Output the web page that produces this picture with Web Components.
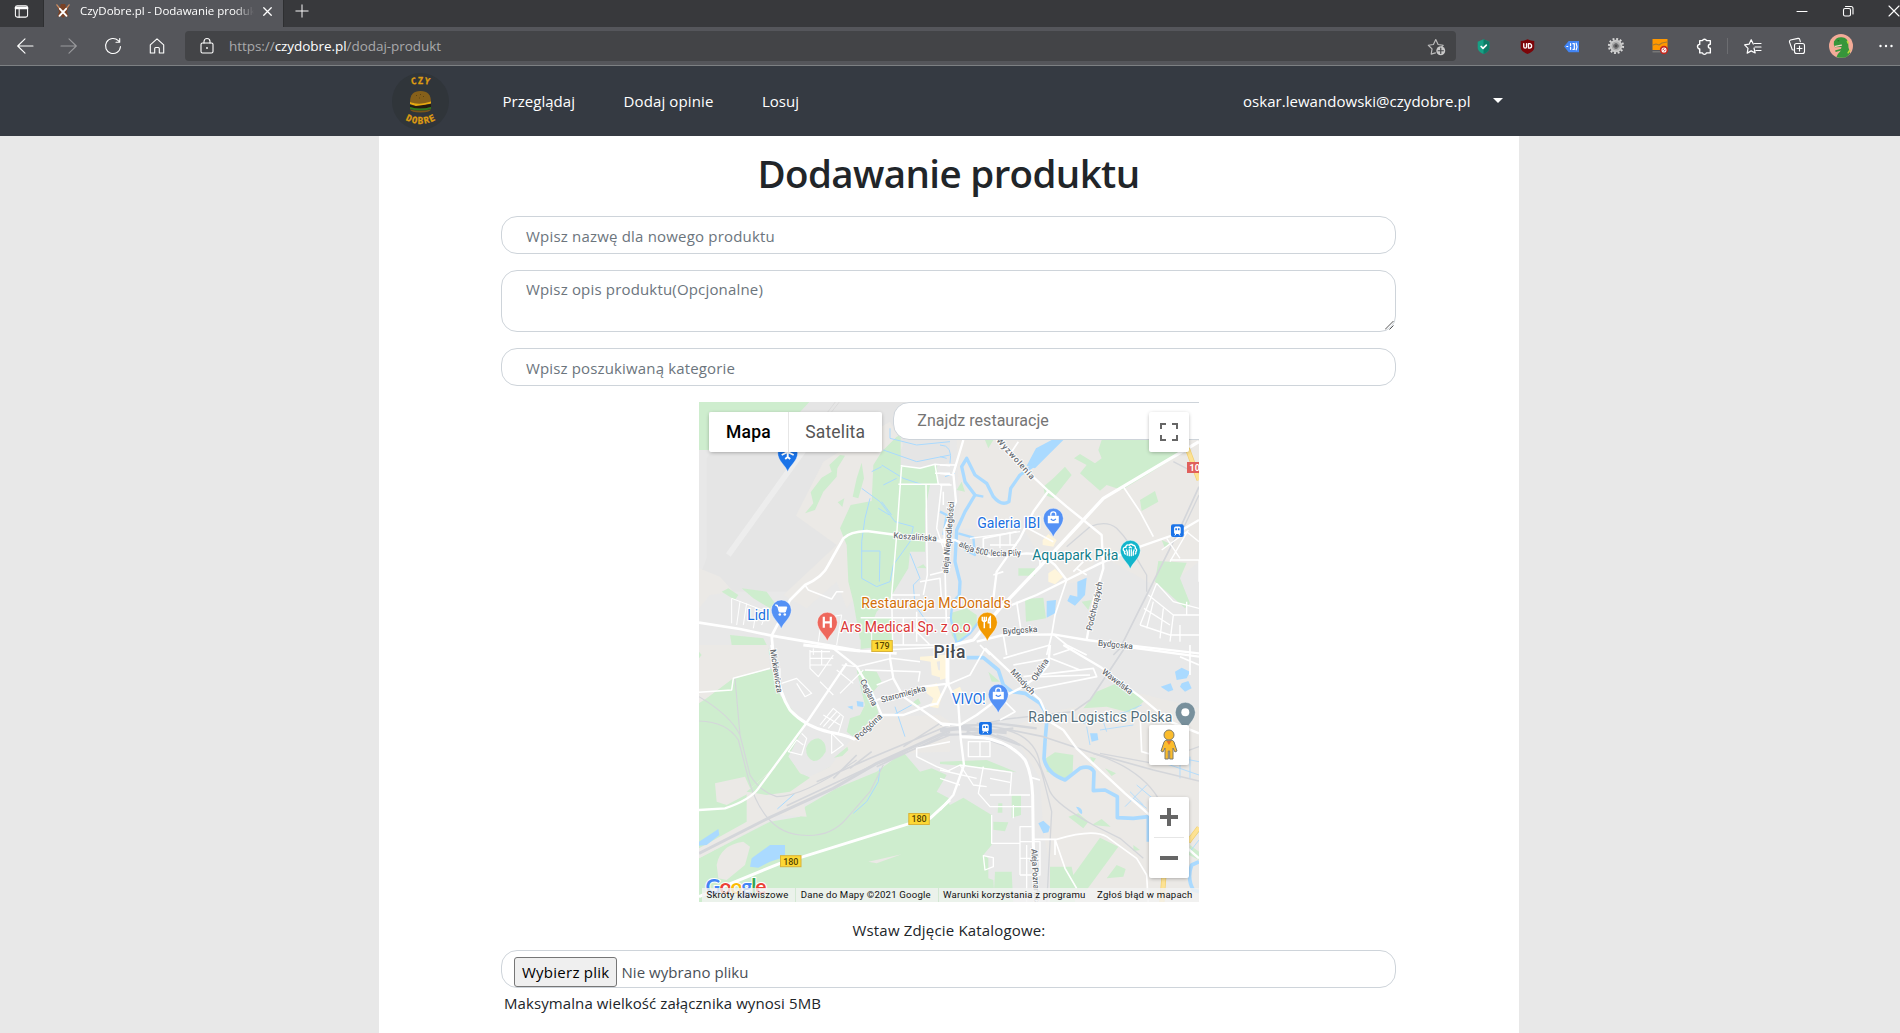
<!DOCTYPE html>
<html lang="pl">
<head>
<meta charset="utf-8">
<title>CzyDobre.pl - Dodawanie produktu</title>
<style>
html,body{margin:0;height:100%;overflow:hidden}
body{background:#e8e8e8;font-family:"Open Sans","Noto Sans",sans-serif;font-size:15px;color:#212529}
</style>
</head>
<body>
<cd-app></cd-app>
<script>
const define=(name,html,extra)=>{
  const t=document.createElement('template');t.innerHTML=html;
  customElements.define(name,class extends HTMLElement{
    constructor(){super();this.attachShadow({mode:'open'}).append(t.content.cloneNode(true));}
    connectedCallback(){extra&&extra(this);}
  });
};

/* Text run set to a given width by adjusting its tracking */
define('fit-text',`<style>:host{display:inline-block;flex:none;white-space:pre;line-height:24px}</style><slot></slot>`,el=>{
  const w=+el.getAttribute('w');if(!w)return;
  el.style.width='auto';
  const n=el.textContent.length,nat=el.getBoundingClientRect().width;
  el.style.letterSpacing=((w-nat)/n)+'px';
  el.style.width=w+'px';
});

const I={
 tabs:`<rect x="1.5" y="2" width="13" height="12" rx="2"/><path d="M2 4.2h12" stroke-width="2.6"/><path d="M5.5 4v10"/>`,
 fav:`<g stroke="none"><path fill="#7a4226" d="M5.500 0h5l1 4 3-1-2 5.500 2 6-4-1-2.500 2.500-2.500-2.500-4 1 2-6-2-5.500 3 1z"/></g><path stroke="#c98a60" stroke-width="1.600" d="M1 1l3 4M15 1l-3 4"/><path stroke="#fff" stroke-width="2.200" d="M4.500 5.500l7.500 8M11.500 5.500l-7.500 8"/>`,
 x:`<path d="M4 4l8 8M12 4l-8 8" stroke-width="1.4"/>`,
 plus:`<path d="M8 1v14M1 8h14"/>`,
 back:`<path d="M16 8H.7M8 .8L.7 8 8 15.2"/>`,
 fwd:`<path d="M0 8h15.300M8 .8L15.300 8 8 15.2"/>`,
 reload:`<path d="M15.500 8.500a7.500 7.500 0 1 1-2.200-5.800L14.500 4M14.700.5V4.200H11"/>`,
 home:`<path d="M1.300 6.800L8 .9l6.700 5.900V15H10.300V10.500a1 1 0 0 0-1-1H6.700a1 1 0 0 0-1 1V15H1.300z"/>`,
 lock:`<rect x="2" y="5" width="12" height="10" rx="1.500"/><path d="M5 5V3.500a3 3 0 0 1 6 0V5"/><circle cx="8" cy="10" r=".9" fill="#fff" stroke="none"/>`,
 starplus:`<path stroke="#bbb" d="M7 14l-4 1.200.8-5L.3 6.800l4.800-.7L7.300 1.500l2.200 4.600 4.800.7-1.500 1.500"/><circle cx="12" cy="12" r="4.200" fill="#c8c8c8" stroke="none"/><path stroke="#434447" d="M12 9.500v5M9.500 12h5"/>`,
 shield:`<g stroke="none"><path fill="#16a085" d="M8 .3L14.200 3v6c0 3.500-3 5.500-6.200 7-3.200-1.500-6.200-3.500-6.200-7V3z"/><path fill="#0d7a66" d="M8 .3L14.200 3v6c0 3.500-3 5.500-6.200 7z"/></g><path stroke-width="1.800" d="M5.500 8l2 2 3.500-3.500"/>`,
 ub:`<path stroke="none" fill="#7c0509" d="M8 .3Q11.500 2 15.200 2v7c0 3.500-4 5.500-7.200 7-3.200-1.500-7.200-3.500-7.200-7V2Q4.500 2 8 .3z"/><path stroke-width="1.400" d="M4 5v3.200q0 1.500 1.500 1.500T7 8.200V5M9 5v4.700h1q2.400-.2 2.400-2.300T10 5z"/>`,
 tag:`<path stroke="none" fill="#4285f4" d="M5 2h11v12H5L0 8z"/><path stroke-width="1.300" d="M3 8h1M7 5v2M7 9v2M9.500 5h1.500v6H9.500M13 4.500q1.600 3.500 0 7"/>`,
 gear:`<circle cx="8" cy="8" r="7" stroke="#d8d8d8" stroke-width="2.200" stroke-linecap="butt" stroke-dasharray="1.900 1.765"/><circle cx="8" cy="8" r="4.500" stroke="#c8c8c8" stroke-width="3.600"/><circle cx="8" cy="8" r="3.900" stroke="#999" stroke-width=".8"/><circle cx="8" cy="8" r="2" fill="#4c4c4f" stroke="#777"/>`,
 orange:`<path stroke="none" fill="#ff9800" d="M.5 1h15v11H.5z"/><path stroke="#a87a30" d="M1 7l3-1 3 1 3-2 5-1"/><path stroke="none" fill="#777" d="M.5 13h9v1.500h-9z"/><circle cx="12" cy="12" r="4.200" fill="#c4281e" stroke="none"/><circle cx="12" cy="12" r="2" /><path d="M10.700 13.300l2.600-2.600"/>`,
 puzzle:`<path d="M3.500 2.500h2.600a2 2 0 0 1 3.800 0h3.600v3.400a1.900 1.900 0 0 0 0 3.800v4.300H9.800a1.900 1.900 0 0 1-3.700 0H3.500V10.200A2.100 2.100 0 0 1 3.500 6z" stroke-width="1.300"/>`,
 favs:`<path d="M9 10l1.200 5-4-2.100-4 2.200.8-4.800L-.4 6.900l4.500-.7L6.200 1.700 8.300 6M9.500 5.500H16M10 9h6M11 12.500h5" stroke-width="1.200"/>`,
 coll:`<rect x="5.500" y="5.500" width="10" height="10" rx="2"/><path d="M10.500 8v5M8 10.500h5M4.500 12l-1.200-.3L.4 3.800Q.3 2.500 1.500 2L9 .4q1.300-.2 1.700 1l.6 2.300"/>`,
 dots:`<g fill="#fff" stroke="none"><circle cx="2.500" cy="8" r="1.200"/><circle cx="8" cy="8" r="1.200"/><circle cx="13.500" cy="8" r="1.200"/></g>`,
 min:`<path d="M3 8.500h10"/>`,
 restore:`<rect x="3.500" y="5.500" width="7" height="7.500" rx="1.500"/><path d="M5.500 3.500h5.500a2 2 0 0 1 2 2V11"/>`,
 close:`<path d="M3 3l10 10M13 3L3 13"/>`,
 dino:`<circle cx="8" cy="8" r="8" fill="#f3ab98" stroke="none"/><path stroke="none" fill="#36963a" d="M3.300 5Q5 1.800 8.500 2.200 12.500 2.500 12.800 6.500L13 9l1.200 4-2.400 2.100Q9 16.600 5 15.300 5.800 13 8 11L4.500 12 4 11 8 9.800 8.300 8.600 4 8.800 3.200 7z"/><path stroke="#f6d5c4" stroke-width=".8" d="M4.300 8.200l4-.8"/><path stroke="#206824" stroke-width=".7" d="M6 4.500h.5"/><path stroke="#b9d83a" d="M12.800 12.500l1-1.500M12.300 5l.4 1"/>`
};
define('ui-icon',`<style>:host{display:inline-flex;align-items:center;justify-content:center;flex:none}svg{display:block;flex:none;overflow:visible;fill:none;stroke:#fff;stroke-width:1.100;stroke-linecap:round;stroke-linejoin:round}</style>`,el=>{
  const s=el.getAttribute('s')||16;
  el.shadowRoot.innerHTML+=`<svg width="${s}" height="${s}" viewBox="0 0 16 16">${I[el.getAttribute('n')]}</svg>`;
});

define('browser-chrome',`<style>
:host{display:block;height:66px;color:#fff;background:#55565b;overflow:hidden}
.strip{display:flex;height:27px;background:#38393c}
.c44{width:42px;height:22px;padding-right:1px}
.tab{display:flex;flex:none;align-items:center;width:241px;height:27px;box-sizing:border-box;padding:0 8px 5px 12px;background:#55565b;border-left:1px solid #2e2f31;border-right:1px solid #2e2f31}
.title{flex:1;min-width:0;margin-left:10px;height:22px;display:flex;align-items:center;overflow:hidden;font-size:11.500px;-webkit-mask:linear-gradient(90deg,#000 155px,transparent 174px);mask:linear-gradient(90deg,#000 155px,transparent 174px)}
.new{width:35px;height:21px}
.win{margin-left:auto;display:flex;height:22px}.win ui-icon{width:46px}.win ui-icon:last-child{width:46px;margin-right:-17px;overflow:visible}
.bar{display:flex;align-items:center;height:38px;border-bottom:1px solid #7d8083}
.bar>*{flex:none}
.nav ui-icon{width:44px}.nav{display:flex;width:182px;padding-left:3px}
.url{display:flex;align-items:center;width:1271px;height:30px;background:#434447;border-radius:4px;font-size:13.500px;color:#a9a9ab}
.url ui-icon{width:44px}.url b{font-weight:400;color:#fff}.url .st{margin-left:auto;width:40px}
.ext{display:flex;padding-left:5px;align-items:center}.ext ui-icon{width:44.200px}
.sep{width:1px;height:16px;background:#6c6d71;margin:0 2px 0 1px}
.r{display:flex;align-items:center}.r ui-icon{width:45px}.r ui-icon:nth-child(2){width:43.500px}
</style>
<div class="strip"><ui-icon class="c44" n="tabs" s="15"></ui-icon>
<div class="tab"><ui-icon n="fav" s="14"></ui-icon><div class="title"><fit-text w="187">CzyDobre.pl - Dodawanie produktu</fit-text></div><ui-icon n="x" s="15"></ui-icon></div>
<ui-icon class="new" n="plus" s="14"></ui-icon>
<div class="win"><ui-icon n="min"></ui-icon><ui-icon n="restore"></ui-icon><ui-icon n="close"></ui-icon></div></div>
<div class="bar"><div class="nav"><ui-icon n="back"></ui-icon><ui-icon n="fwd" style="opacity:.4"></ui-icon><ui-icon n="reload"></ui-icon><ui-icon n="home"></ui-icon></div>
<div class="url"><ui-icon n="lock"></ui-icon><fit-text w="212">https://<b>czydobre.pl</b>/dodaj-produkt</fit-text><ui-icon class="st" n="starplus" s="17"></ui-icon></div>
<div class="ext"><ui-icon n="shield" s="15"></ui-icon><ui-icon n="ub" s="15"></ui-icon><ui-icon n="tag" s="15"></ui-icon><ui-icon n="gear"></ui-icon><ui-icon n="orange"></ui-icon><ui-icon n="puzzle" s="17"></ui-icon></div>
<div class="sep"></div><div class="r"><ui-icon n="favs"></ui-icon><ui-icon n="coll"></ui-icon><ui-icon n="dino" s="24"></ui-icon><ui-icon n="dots"></ui-icon></div></div>`);

define('cd-logo',`<style>:host{display:block;width:57px;height:57px}svg{display:block}text{font:bold 9px "DejaVu Sans Mono",monospace;fill:#dd9b12;stroke:#dd9b12;stroke-width:.3}</style>
<svg width="57" height="57" viewBox="0 0 57 57"><circle cx="28.500" cy="28.500" r="28.500" fill="#30353a"/>
<defs><path id="t" d="M13 14.500Q28.500 7 44 14.500"/><path id="b" d="M11 45.500Q28.500 56.500 46 45.500"/></defs>
<text text-anchor="middle"><textPath href="#t" startOffset="50%" textLength="18">CZY</textPath></text>
<text text-anchor="middle"><textPath href="#b" startOffset="50%" textLength="32">DOBRE</textPath></text>
<path fill="#86601a" d="M18 29Q18 18 28.500 18T39 29Q28 33 18 29z"/><path stroke="#5f4411" d="M24 22l1 1M28 21l1 1M32 23l-1 1M27 25l1 0"/>
<path fill="#e6a80f" d="M18 29Q28 32.500 39 28.500V30.500L26 34 18 31z"/><path fill="#241b10" d="M18 32L24 33 39 31V34Q28 37 18 34z"/><path fill="#2f7a1c" d="M18 34Q28 37 39 34V36Q28 39 18 36z"/><path fill="#7a5618" d="M18 36.500Q28 39 39 36.500Q38 39.500 28.500 39.500T18 36.500z"/></svg>`);

define('cd-navbar',`<style>
:host{display:block;height:70px;background:#353a42;color:#fff}
.in{display:flex;align-items:center;height:70px;width:1140px;margin:0 auto 0 379px;padding-left:12.500px;box-sizing:border-box}
nav{display:flex;gap:48.500px;margin-left:54px}
.user{margin-left:auto;display:flex;align-items:center;gap:22.500px;margin-right:16px}
i{border:5px solid transparent;border-top:5px solid #fff;border-bottom:0;margin-top:-1px}
</style><div class="in"><cd-logo></cd-logo><nav><fit-text w="72.500">Przeglądaj</fit-text><fit-text w="90">Dodaj opinie</fit-text><fit-text w="37">Losuj</fit-text></nav>
<div class="user"><fit-text w="227.500">oskar.lewandowski@czydobre.pl</fit-text><i></i></div></div>`);

define('cd-field',`<style>
:host{display:flex;flex:none;box-sizing:border-box;width:895px;height:38px;border:1px solid #ced4da;border-radius:16px;background:#fff;color:#6c757d;padding:7px 24px 0;position:relative}
:host([area]){height:62px;padding-top:6px}
svg{display:none;position:absolute;right:1px;bottom:1px}:host([area]) svg{display:block}
</style><slot></slot><svg width="9" height="9" viewBox="0 0 9 9" stroke="#555" fill="none"><path d="M0 8.500L8.500 0M4.500 8.500L8.500 4.500"/></svg>`);

define('cd-file',`<style>
:host{display:flex;flex:none;box-sizing:border-box;width:895px;height:38px;border:1px solid #ced4da;border-radius:16px;background:#fff;padding:6px 12px 0;gap:4.500px;color:#495057}
button{box-sizing:border-box;width:103px;height:30px;padding:0 0 1px 7px;text-align:left;border:1px solid #767676;border-radius:3px;background:#efefef;font:inherit;color:#000;line-height:24px}
.n{padding-top:3px}
</style><button><fit-text w="87.500">Wybierz plik</fit-text></button><div class="n"><fit-text w="127">Nie wybrano pliku</fit-text></div>`);

/* Map artwork is drawn in four tiles, each on a grid of three units per pixel */
const T=['translate(-9 -7) scale(.33333)','translate(241 -7) scale(.33333)','translate(-9 243) scale(.33333)','translate(241 243) scale(.33333)'];
const G='#ceedce',W='#aadaff',B='#ebe9e6',U='#e5e5e5',R='#d4d6da',Y='#fef5dc';
const land=[
[0,U,'M50,190L60,175 360,21H780V200L470,330 318,362 437,430 437,470 330,590 120,590 27,545 50,490Z'],
[0,B,'M400,200L480,150 600,80 640,150 560,320 480,480 500,600 470,640 440,560 350,640 280,600 440,450 318,362Z'],
[0,B,'M27,520L90,545 130,590 60,600 27,640Z'],
[0,G,'M27,21H358L330,51 57,51V165H27Z'],
[0,G,'M345,355L375,345 400,290 440,245 442,220 465,182 450,180 418,210 425,230 395,248 362,292 370,325Z'],
[0,G,'M443,322L463,310 457,336Z'],
[0,G,'M620,125L632,120V210L690,220 740,207 745,265 720,270 705,350V470H660L655,520 600,610 560,650 540,700 510,735 490,620 475,560 470,450 450,400 482,330 545,318 550,210 575,170Z'],
[0,G,'M515,203L522,250 505,310 488,305 500,250Z'],
[0,G,'M512,668H607V750L512,762ZM120,720L220,730 245,780H130ZM95,590L115,580 145,600 135,615ZM155,580L230,590 255,625 240,640 190,610ZM680,518l20,-10 10,12z'],
[1,B,'M50,135H777V500L700,560 640,570 480,480 420,560 350,570 250,400 60,400Z'],
[1,G,'M485,135H700L740,165 620,240 545,285 500,270 480,287 420,235 440,210 402,190 420,177 465,205 485,190 475,165Z'],
[1,G,'M600,315L645,288 655,320 605,348ZM310,275L340,250 375,215 395,240 340,310 315,300ZM655,498L740,503 720,550 750,625 735,640 680,590 645,560ZM235,520h50v22h-50zM255,612L310,608 318,670 258,680ZM30,655L80,640 110,660V690L50,745 35,720ZM425,620l30,-5 -10,30zM50,285l15,-25 10,30zM665,435l22,10 -12,15zM135,135h25l-15,25z'],
[1,Y,'M308,435L325,417 350,435 340,455 308,450ZM325,535L345,522 370,545 345,568 325,560Z'],
[2,B,'M27,0H235L240,70 135,100 125,135 27,180Z'],
[2,G,'M27,175L50,160 130,100 245,72 270,150 345,240 295,335 330,385 360,398 430,360 320,440 240,500 27,620Z'],
[2,G,'M27,640L240,530 330,515 345,485 440,430 560,380 640,322 690,380 725,370 770,390 740,440 777,460V780H27Z'],
[2,B,'M170,440L250,370 300,350 350,400 420,365 490,275 580,215 750,210 780,230V320L620,325 440,420 340,470 350,515 270,510 27,640V610L170,530Z'],
[2,B,'M75,415L165,395 185,440 110,480 80,470ZM80,660Q90,600 160,590L180,605 165,660 110,705 85,700ZM535,650L635,628 560,655Z'],
[2,G,'M170,440L295,335 330,385 360,398 300,440 230,450ZM348,310Q360,280 385,280 410,290 407,320 390,350 370,348 348,340 348,310ZM500,75L560,80 575,110 550,140 565,205 490,275 470,260 480,220 510,210 525,180 510,120ZM472,305l-40,33 25,-5 18,-18zM665,175L685,160 692,175 675,185ZM27,40V20l8,10z'],
[2,Y,'M690,35L765,30V45L740,50 745,75 765,80 760,100 725,90 722,50 690,45ZM710,125L740,115 755,155 745,190 720,185 730,160 710,145Z'],
[3,B,'M330,200L440,180 500,120 777,190V780H350L310,560 300,400 240,300 180,260Z'],
[3,G,'M0,450L30,480 70,458 155,510V600L130,630 145,640V700L160,705 165,780H0ZM165,680h50l5,100h-60zM215,450h28v60l-28,8zM175,475h12v28h-14zM160,530l45,2 -10,27 -35,-5zM318,340L345,322 400,330 398,380 375,400 320,380ZM430,190L470,140 530,115 570,130 615,165 575,205 500,185ZM480,578L535,605 440,735 405,740V780H330V665L395,665 400,690ZM500,700L530,660 557,672 550,695ZM385,515L415,505 445,530 430,550ZM455,540L485,522 512,545ZM495,370L528,385 515,393ZM450,335l18,5 -10,15zM0,350L140,345 230,382 150,370 0,357ZM145,80l35,30 -25,0zM580,600l20,15 -20,3zM750,600l27,20v25l-30,-15z'],
[3,Y,'M0,30L18,30V100L0,105ZM30,140l30,-15 10,25 -30,15z']
];
const water=[
[1,'M288,160L335,135H370L330,175 285,220 260,212Z M412,560L440,548 435,600 405,632 382,618 390,600 412,605Z M320,618L348,615 345,655 320,668Z'],
[2,'M185,640L240,600 285,600 285,635 240,650 205,668 180,665Z M27,590L85,552 88,570 50,600 27,602Z M500,168l20,3v15l-18,-2z M472,185l16,-3v12z'],
[3,'M705,80L725,68 750,80 740,100 710,105Z M725,115L745,108 755,130 735,140 720,125Z M662,125l30,-10 8,20 -15,5z M295,535L310,527 330,545 325,562 310,565Z M450,265l22,0 3,20 -20,5z M408,485q22,2 18,22l-6,-2z']
];
/* tile, colour, width, path */
const lines=[
[0,W,3,'M515,280L570,320 615,380 670,395 660,440 610,510 600,560 560,575 515,550V440L525,370 540,310M515,468H570L568,560M575,210L640,250 700,270M600,100V130L680,150 780,140M580,165L680,200 780,180M575,320L605,360M565,340L598,360M660,475L690,550 670,570 675,630 710,680M580,270l40,-20M545,230l30,-15'],
[1,W,10,'M290,205L240,240 212,280 207,320Q185,335 160,305L140,265 105,240 80,190 65,215 75,260 105,300 75,350 50,405 45,500 60,560 58,600'],
[1,W,7,'M105,300L130,305M55,415L100,428 105,480 75,465M58,600L38,620 32,670 50,745 90,715 120,675M0,350L20,360 10,420'],
[1,W,3,'M0,150Q40,150 30,205M0,185L20,190M15,245l30,-10'],
[2,W,3,'M570,370L565,410 530,470 490,505M262,492L315,445M615,185L645,275M610,210L665,180'],
[3,W,11,'M80,38L130,38 175,75 190,120 215,140 255,145 300,175 322,210 315,290 312,340Q320,385 375,405L420,370Q450,360 462,380L460,437 495,435 532,455V518L580,520 625,515V590M777,650L755,660Q740,700 760,735L777,740'],
[3,W,2.500,'M430,235L560,200 605,180M480,255L580,240M555,485L620,420M570,440L610,480M590,420L650,470M580,460L620,490M700,335L777,350M690,360L777,390M720,400V330M750,400V335M650,350L690,360M440,245L450,300M490,230L500,260M740,600L777,560M750,620L777,585'],
[0,'#ededed',17,'M115,480L345,160'],[0,'#d5d5d5',2,'M395,75L436,21M406,75L448,21'],
[1,R,5,'M777,275L720,400 640,560 540,760 520,780'],[1,R,4,'M380,455L450,395Q500,375 530,400 570,440 590,490L620,540V590M700,200L777,240M777,300L730,400'],
[2,R,9,'M27,625L240,517 430,430 560,355 780,255'],[2,R,5,'M290,482L540,365 780,270M380,410L540,340 780,240M430,400L500,330M480,370L545,320M560,365L780,262M640,305L750,235'],
[2,R,3.500,'M27,155Q120,210 150,270 165,330 180,390 210,440 260,455 340,455 500,345M27,228Q110,230 145,285 165,360 175,400 220,560 330,570 420,580 470,520L540,440 580,360M135,100L150,270'],
[3,R,12,'M0,256L60,250 200,262'],[3,R,7,'M0,270L60,268 130,262 220,250M60,245L170,235 290,250M100,250L240,300M80,260L220,310'],
[3,R,5,'M110,235L310,275 460,325 640,375 777,408M0,240L110,240 200,222 400,200 450,165 500,90 560,0'],
[3,R,4,'M200,255Q290,280 300,360L330,440Q350,480 460,540L540,580 610,640M170,270Q290,300 310,400L335,500 320,780M460,325Q600,370 655,460M480,325L640,355 777,305'],
[0,'#fff',8,'M27,683L150,702 245,722 420,752 512,768 620,775M245,722L262,690 300,615 345,570Q400,545 415,510L460,430Q480,410 530,408L620,420 740,437 780,445M245,722L250,780'],
[0,'#fff',4.500,'M345,570L355,585 425,612 440,590 460,590M635,210L620,420 605,600 608,750M632,212L690,220 735,208 780,212M625,268H780M735,208L745,268M708,268L712,540 700,600M690,560L750,550 755,620M720,540L780,525M735,235H780M755,268L740,400 780,520M607,600L690,600M512,668H780M607,690H660L720,750M640,668V750M680,650V740M608,750H780M760,290V330'],
[0,'#fff',3,'M125,610V685M150,620L140,690M125,610L230,650 215,690M170,625L160,690M200,640L190,700M385,740L395,670 455,660 440,750M370,760V780M545,745V700'],
[1,'#fff',10,'M777,140L650,215 490,310 430,375 300,515 180,640 100,735 0,760'],
[1,'#fff',7,'M170,135L225,195 325,288 380,335 430,375 485,420 490,520 460,620 440,735M325,288L280,350 240,430 170,530 160,610M70,135L40,235 48,320 15,400M0,435H45L150,485 260,475 305,478 345,510 380,555M777,375L700,420 600,455 480,505 380,555 290,600 215,630M110,740L190,720 340,718 440,735 600,755 777,775'],
[1,'#fff',5,'M380,555L345,660 335,720 320,780M550,275L600,350 640,425M230,620L245,720M235,140L215,170M0,210H50M0,235L40,240M0,270H35M12,400L20,720M255,395L340,440M230,410L130,430V460M160,540L190,530M300,480V520M410,520L440,540M400,530L430,500M340,718L380,750 440,780M190,720L200,780M120,750L150,780'],
[1,'#fff',4,'M665,465L740,410 777,440M690,500L745,405M680,430L720,490M690,495H777V560M650,565L600,690M650,565L700,620 777,640M625,600L700,660 690,740M612,640L690,690M600,690L690,720H777M640,620L620,700M670,640L660,730M700,660H777M720,690V740M740,620V660M90,430L240,410M150,450H230M180,420V460M210,410V450'],
[2,'#fff',9,'M245,0L258,70Q270,150 300,195 345,245 420,262 460,268 495,283M27,755L270,655 340,635 660,535 720,520 780,465M340,0L430,10 510,18'],
[2,'#fff',7,'M470,55L345,240 205,430Q180,465 105,490L27,495M430,10L500,65 545,140 575,210 640,210 720,180 745,175M575,210L495,283M600,40L610,100 640,155 760,240H780M560,165L700,125 780,115M775,0V110L740,180'],
[2,'#fff',4.500,'M240,70L130,100 125,135 27,142M510,18L780,5M500,65L605,40 690,50M525,75L690,80 685,110M600,0V40M780,290L680,310V335L740,365 780,380M610,100L560,120M640,155L670,140'],
[2,'#fff',3.500,'M360,15V70L385,95 430,30M360,40H430M360,60H425M395,15V60M360,20H420M275,115L320,100 365,145 345,155 320,115M390,240L430,190 460,215 445,265M400,245L440,200M415,250L450,210M400,210L450,240M335,265L350,280 335,330 295,320 320,285 340,300M425,265L460,300 425,325ZM440,75L490,115M390,110L430,150M455,60L500,65M450,145L520,75M270,115V70'],
[3,'#fff',9,'M60,275L130,278Q210,290 255,345 275,385 278,450L280,600 290,780'],
[3,'#fff',7,'M0,235L60,240 110,210 170,165 240,130 300,90 325,60 330,0M20,0V110L55,180 62,280 72,360 40,450 0,495M135,10L300,165 330,230 370,255 410,310 555,445 777,640M370,0L480,65 600,155 690,230 777,265M520,0L777,35'],
[3,'#fff',5,'M20,120L90,90 135,10M280,583H350Q460,550 500,575L590,640 620,690 625,780M345,583L375,670 410,730M345,583V630M190,40L330,0M220,60L330,40 420,75M250,95L460,70 470,95 270,135M300,95L450,90M340,30L400,10M190,165L225,200 180,225M250,130L230,90M600,200L605,320 640,330M750,0V90M720,35L777,60M275,398L300,405'],
[3,'#fff',4,'M20,380L60,360 215,382 210,450M130,365L115,445 150,485H275M60,360L100,420 140,425M150,400L210,412M150,450H270M155,510V595H240M240,690V545H275M240,590H300V690H240M240,640H300M260,600V780M85,290h65v45h-65zM120,290V335M130,632L160,638V665L135,675ZM220,480V520M0,375L110,400M0,400L60,420'],
[1,'#f2cf6b',15,'M742,160L777,255'],[1,'#fde293',11,'M742,160L777,255'],
[3,'#f2cf6b',15,'M745,590L777,548M665,780L672,690'],[3,'#fde293',11,'M745,590L777,548M665,780L672,690']
];
/* tile, x, y, rotation, length, text */
const streets=[
[0,610,430,4,130,'Koszalińska'],[1,24,536,-85,216,'aleja Niepodległości'],
[1,118,82,48,232,'aleja Wyzwolenia'],[1,455,708,-77,150,'Podchorążych'],[1,188,718,-4,105,'Bydgoska'],[1,473,752,6,105,'Bydgoska'],
[2,240,14,81,132,'Mickiewicza'],[2,509,108,63,86,'Ceglana'],[2,575,173,-15,138,'Staromiejska'],[2,504,287,-43,102,'Podgórna'],
[3,210,82,47,94,'Młodych'],[3,287,110,-57,74,'Okólna'],[3,484,84,37,108,'Wawelska'],[3,274,612,87,170,'Aleja Poznańska']
];
const pois=[
[278.300,126,63,'#1a6fe0','Galeria IBI'],[333.300,158.300,86,'#12808c','Aquapark Piła'],[162.300,206.300,149.500,'#d27008','Restauracja McDonald\'s'],
[141.300,230,130.500,'#d93636','Ars Medical Sp. z o.o'],[48.300,218,22,'#1a6fe0','Lidl'],[252.700,302,34,'#1a6fe0','VIVO!'],[329.300,320.300,144,'#546e7a','Raben Logistics Polska']
];
const bag='<path fill="#fff" d="M-5.500-2.500H5.500V5H-5.500z"/><path d="M-2.500-2.500V-4a2.500 2.500 0 0 1 5 0V-2.500" stroke="#fff" stroke-width="1.300" fill="none"/><path d="M-2.500.5Q0 3.500 2.500.5" stroke="#4285f4" stroke-width="1.300" fill="none"/>';
const pins=[
[354.300,116.300,'#5491f5',bag],[299.300,292.300,'#5491f5',bag],
[431.300,148.300,'#12b5cb','<path d="M-4.500 4A2 2 0 0 1-5.500 1 2 2 0 0 1-4.500-3 2.200 2.200 0 0 1-1-5 2 2 0 0 1 2.500-5 2.300 2.300 0 0 1 5-2 2 2 0 0 1 5.500 1.500 2 2 0 0 1 4.500 4M-1 6V-1M1 6V-1M-3 5.500Q-2.500 1-4-1M3 5.500Q2.500 1 4-1M-1.500-2L0-3.500 1.500-2" fill="none" stroke="#fff" stroke-width="1.300"/>'],
[288.300,220.300,'#f29900','<path d="M3 6V-5.500Q1-4 1 .5H3" fill="none" stroke="#fff" stroke-width="1.500"/><path d="M-3-5.500V6M-5-5.500V-2Q-3 .5-1-2V-5.500" fill="none" stroke="#fff" stroke-width="1.500"/>'],
[128.300,220.300,'#ee675c','<path d="M-3.500-5.500V5.500M3.500-5.500V5.500M-3.500 0H3.500" fill="none" stroke="#fff" stroke-width="2.200"/>'],
[82.300,208,'#5491f5','<path d="M-6-5H-4L-2 2H4L5.500-3H-3z" fill="#fff" stroke="#fff"/><circle cx="-1.500" cy="4.500" r="1.300" fill="#fff"/><circle cx="3.500" cy="4.500" r="1.300" fill="#fff"/>'],
[88.700,51,'#1a73e8','<path d="M0-6V5M-6 2L0-1 6 2M-2.500 6L0 4 2.500 6" fill="none" stroke="#fff" stroke-width="1.900"/>'],
[486.300,310.300,'#78909c','<circle r="4" fill="#fff"/>']
];
const shields=[[172.300,238,'179'],[209.300,411,'180'],[81,453.200,'180']];
const P=(t,a,d)=>`<g transform="${T[t]}"><path ${a} d="${d}"/></g>`;
const train=(x,y)=>`<g transform="translate(${x} ${y})"><rect width="12.800" height="12.800" rx="2" fill="#1a73e8"/><rect x="3.100" y="2.300" width="6.600" height="7.300" rx="1.500" fill="#fff"/><path d="M4.300 4h1.600v2H4.300zM6.900 4h1.600v2H6.900z" fill="#1a73e8"/><path d="M3.800 11.200l1.200-1.700M9 11.200l-1.200-1.700" stroke="#fff"/></g>`;
define('map-canvas',`<style>:host{display:block}svg{display:block}text{font-family:Roboto,sans-serif}
.st{font-size:25.500px;font-weight:500;fill:#666b71;stroke:#fff;stroke-width:5;paint-order:stroke}
.poi{font-size:14px;stroke:#fff;stroke-width:2.400;paint-order:stroke;stroke-linejoin:round}
.sh{font-size:9px;font-weight:500;fill:#574500}
.g{font-family:Lato,Roboto,sans-serif;font-size:21px;stroke:#fff;stroke-width:2;paint-order:stroke}</style>
<svg width="500" height="500" viewBox="0 0 500 500"><rect width="500" height="500" fill="#e8e8e8"/>
${land.map(([t,c,d])=>P(t,`fill="${c}"`,d)).join('')}${water.map(([t,d])=>P(t,`fill="${W}"`,d)).join('')}
<g fill="none" stroke-linejoin="round">${lines.map(([t,c,w,d])=>P(t,`stroke="${c}" stroke-width="${w}"`,d)).join('')}</g>
${streets.map(([t,x,y,r,l,s])=>`<g transform="${T[t]}"><text class="st" transform="translate(${x} ${y}) rotate(${r})" textLength="${l}">${s}</text></g>`).join('')}
<g transform="${T[1]}"><path id="lecia" fill="none" d="M55,452Q100,478 150,482T252,480"/><text class="st"><textPath href="#lecia" textLength="194">aleja 500-lecia Piły</textPath></text></g>
${shields.map(([x,y,s])=>`<rect x="${x+.5}" y="${y+.5}" width="20.500" height="11" fill="#fdd835" stroke="#d9b33a"/><text class="sh" x="${x+3.300}" y="${y+9.300}" textLength="15">${s}</text>`).join('')}
<rect x="488" y="60" width="14" height="11" fill="#e0605c"/><text x="490.500" y="69" font-size="9" font-weight="700" fill="#fff">10</text>
${train(472,122.300)}${train(280,320)}
${pins.map(([x,y,c,s])=>`<g transform="translate(${x} ${y})"><path fill="${c}" stroke="#fff" stroke-width=".4" d="M0 18.800C-1.500 13-10 8-10 0A10 10 0 0 1 10 0C10 8 1.500 13 0 18.800z"/>${s}</g>`).join('')}
${pois.map(([x,y,l,c,s])=>`<text class="poi" x="${x}" y="${y}" textLength="${l}" fill="${c}">${s}</text>`).join('')}
<text class="poi" x="234.500" y="255.500" style="font-size:17.500px;font-weight:500" fill="#454a50" textLength="32">Piła</text>
<text class="g" x="6.500" y="492" textLength="61" font-weight="700"><tspan fill="#4285f4">G</tspan><tspan fill="#ea4335">o</tspan><tspan fill="#fbbc04">o</tspan><tspan fill="#4285f4">g</tspan><tspan fill="#34a853">l</tspan><tspan fill="#ea4335">e</tspan></text></svg>`);

define('map-button',`<style>:host{display:flex;flex-direction:column;align-items:center;justify-content:center;width:40px;height:40px;background:#fff;border-radius:2px;box-shadow:0 1px 4px -1px rgba(0,0,0,.4)}</style><slot></slot>`);

define('cd-map',`<style>
:host{display:grid;width:500px;height:500px;overflow:hidden;font-family:Roboto,sans-serif}
:host>*{grid-area:1/1;min-width:0;min-height:0}
.ui{z-index:1;display:flex;flex-direction:column;width:500px;height:500px}
.top{display:flex;height:50px;align-items:flex-start}.top>*{flex:none}
.tog{display:flex;margin:10px 0 0 10px;width:173px;height:40px;box-sizing:border-box;background:#fff;border-radius:2px;box-shadow:0 1px 4px -1px rgba(0,0,0,.4);align-items:center;font-size:17.500px;color:#565656}
.tog fit-text:first-child{font-weight:500;color:#000;margin:0 16.500px 0 17px}
.tog i{width:1px;height:40px;background:#e6e6e6;margin-right:16.700px}
.search{margin-left:11.300px;width:330px;margin-right:-85px;box-sizing:border-box;height:38px;border:1px solid #ced4da;border-radius:16px 0 0 16px;background:#fff;padding:6px 0 0 23px;color:#757575;font-size:16px}
.side{display:flex;flex-direction:column;align-items:flex-start;margin:273px 0 0 450px}
.zoom{height:80.400px;margin-top:32.300px;justify-content:flex-start}
.zoom svg:first-child{margin-top:11px}
.zoom hr{border:0;width:30px;height:1px;background:#e6e6e6;margin:11px 0 18px}
.att{margin-top:auto;height:14px;margin-left:3.300px;background:rgba(243,243,243,.8);display:flex;align-items:center;font-size:9.600px;color:#111;padding-left:4.200px}
.att i{width:1px;height:14px;background:#d3e8d3;margin:0 4.500px 0 6.800px}.att fit-text{line-height:14px}
svg{display:block}
</style>
<map-canvas></map-canvas>
<div class="ui"><div class="top"><div class="tog"><fit-text w="45">Mapa</fit-text><i></i><fit-text w="60">Satelita</fit-text></div><div class="search"><fit-text w="131.500">Znajdz restauracje</fit-text></div>
<map-button style="margin:10px 0 0 10.700px"><svg width="18" height="18" fill="none" stroke="#666" stroke-width="2"><path d="M1 6V1H6M12 1H17V6M17 12V17H12M6 17H1V12"/></svg></map-button></div>
<div class="side"><map-button><svg width="18" height="32" viewBox="0 0 18 32" stroke="#7c7a6c" fill="#fbbc2c"><path d="M4 13Q4 11 9 11T14 13L17 22 15 23 13 19V30H9.700V22H8.300V30H5V19L3 23 1 22z"/><circle cx="9" cy="6" r="5"/><path d="M6.500 12H11.500L9 16z" fill="#e6732a" stroke="none"/></svg></map-button>
<map-button class="zoom"><svg width="18" height="18" stroke="#666" stroke-width="4"><path d="M9 0V18M0 9H18"/></svg><hr><svg width="18" height="4" stroke="#666" stroke-width="4"><path d="M0 2H18"/></svg></map-button></div>
<div class="att"><fit-text w="82">Skróty klawiszowe</fit-text><i></i><fit-text w="130">Dane do Mapy ©2021 Google</fit-text><i></i><fit-text w="142.500">Warunki korzystania z programu</fit-text><fit-text w="95.500" style="margin-left:11.500px">Zgłoś błąd w mapach</fit-text></div></div>`);

define('cd-app',`<style>
:host{display:block;height:1033px;overflow:hidden}
main{box-sizing:border-box;width:1140px;height:897px;margin-left:379px;background:#fff;padding:12px 0 0 122px;display:flex;flex-direction:column;align-items:flex-start}
h1{margin:0 0 19px;width:895px;height:49px;display:flex;justify-content:center;font-size:38.500px;font-weight:550}
h1 fit-text{line-height:50px}
cd-field{margin-bottom:16px}
.mid{width:896px;display:flex;flex-direction:column;align-items:center}
.mid fit-text{margin:16px 0 8px}
</style>
<browser-chrome></browser-chrome><cd-navbar></cd-navbar>
<main><h1><fit-text w="382">Dodawanie produktu</fit-text></h1>
<cd-field><fit-text w="249">Wpisz nazwę dla nowego produktu</fit-text></cd-field>
<cd-field area><fit-text w="237">Wpisz opis produktu(Opcjonalne)</fit-text></cd-field>
<cd-field><fit-text w="209">Wpisz poszukiwaną kategorie</fit-text></cd-field>
<div class="mid"><cd-map></cd-map><fit-text w="193">Wstaw Zdjęcie Katalogowe:</fit-text></div>
<cd-file></cd-file><fit-text w="317" style="margin:3px 0 0 3px">Maksymalna wielkość załącznika wynosi 5MB</fit-text></main>`);
</script>
</body>
</html>
